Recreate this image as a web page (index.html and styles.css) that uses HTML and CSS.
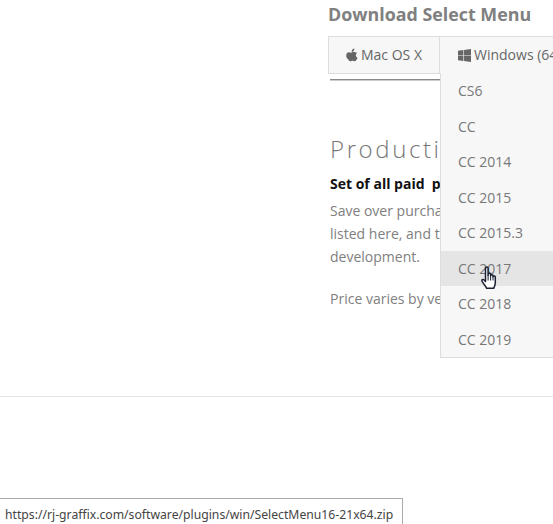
FILE: index.html
```html
<!DOCTYPE html>
<html lang="en">
<head>
    <meta charset="UTF-8">
    <title>Download Select Menu</title>
    <link rel="stylesheet" href="styles.css">
</head>
<body>
    <div class="page">
        <div class="content">
            <h3 class="download-title">Download Select Menu</h3>
            <div class="tabs">
                <div class="tab tab-mac">
                    <svg class="tab-icon" viewBox="0.5 0 13 14.300" width="12" height="14">
                        <path fill="#666" d="M9.600 0.200c.1 1-.3 1.900-.8 2.500-.6.700-1.400 1.100-2.200 1-.1-.9.3-1.800.8-2.400C8 .7 8.900.3 9.600.2zM12.600 4.900c-.9.600-1.400 1.400-1.400 2.500 0 1.200.7 2.200 1.800 2.700-.3.900-.7 1.700-1.300 2.500-.6.800-1.100 1.300-1.900 1.300-.8 0-1.200-.5-2.200-.5s-1.400.5-2.200.5c-.8 0-1.400-.6-2-1.400C1.300 10.900.7 9.200.7 7.700c0-2.300 1.500-3.600 3-3.600.9 0 1.600.6 2.300.6.600 0 1.500-.7 2.600-.7.900 0 2.900.2 4 .9z"/>
                    </svg>
                    <span>Mac OS X</span>
                </div>
                <div class="tab tab-win">
                    <svg class="tab-icon" viewBox="0 0 14 14" width="13" height="13">
                        <path fill="#666" d="M0 2l5.800-.8v5.400H0zM6.500 1.100L14 0v6.600H6.500zM0 7.400h5.800v5.400L0 12zM6.500 7.400H14V14l-7.500-1.100z"/>
                    </svg>
                    <span>Windows (64-bit)</span>
                </div>
            </div>
            <div class="tab-rule"></div>
            <h2 class="product-title">Production Bundle</h2>
            <p class="product-lead">Set of all paid  plugins</p>
            <p class="product-text">Save over purchasing each plugin<br>listed here, and the price supports<br>development.</p>
            <p class="product-text product-price">Price varies by version</p>
        </div>
        <hr class="divider">

        <ul class="menu">
            <li>CS6</li>
            <li>CC</li>
            <li>CC 2014</li>
            <li>CC 2015</li>
            <li>CC 2015.3</li>
            <li class="active">CC 2017</li>
            <li>CC 2018</li>
            <li>CC 2019</li>
        </ul>

        <svg class="cursor" viewBox="0 0 18 24" width="18" height="24">
            <path fill="#fff" stroke="#1a1f33" stroke-width="1.500" stroke-linejoin="round" d="M4.500 2.200c0-1.600 2.600-1.600 2.600 0v7.300V8.300c0-1.400 2.500-1.400 2.500 0v1.500c0-1.300 2.400-1.300 2.400 0v1c0-1.200 2.300-1.200 2.300 .2v5.500c0 2.600-.9 3.900-1.500 5.800H5.600c-.7-2.200-2.400-3.700-3.700-5.600-.9-1.300-1.400-2.200-.8-2.900.7-.7 1.700-.2 3.400 1.700z"/>
            <path fill="none" stroke="#1a1f33" stroke-width="1" d="M7.100 9.500v5M9.600 9.800v4.700M12 10.800v3.700"/>
        </svg>

        <div class="status-link">https://rj-graffix.com/software/plugins/win/SelectMenu16-21x64.zip</div>
    </div>
</body>
</html>
```

FILE: styles.css
```css
html, body {
    margin: 0;
    padding: 0;
    background-color: #fff;
}

.page {
    position: relative;
    width: 553px;
    height: 524px;
    overflow: hidden;
    font-family: "Open Sans", sans-serif;
    font-size: 14px;
    color: #777;
}

.content {
    padding-left: 328px;
    height: 396px;
    box-sizing: border-box;
}

.download-title {
    margin: 0 0 8px;
    font-size: 17.850px;
    line-height: 28px;
    font-weight: 700;
    color: #808080;
    white-space: nowrap;
}

.tabs {
    display: flex;
    width: 300px;
    height: 38px;
    box-sizing: border-box;
    border: 1px solid #ddd;
    background-color: #f7f7f7;
}

.tab {
    display: flex;
    align-items: center;
    white-space: nowrap;
    gap: 3px;
    line-height: 36px;
    color: #666;
}

.tab-mac {
    width: 110px;
    justify-content: center;
    border-right: 1px solid #ddd;
}

.tab-win {
    padding-left: 18px;
}

.tab-icon {
    flex: none;
}

.tab-rule {
    margin: 5px 0 0 2px;
    width: 300px;
    height: 1px;
    border-bottom: 1px solid #ccc;
    background-color: #888;
}

.product-title {
    margin: 51px 0 0 2px;
    font-size: 24px;
    line-height: 33px;
    font-weight: 300;
    letter-spacing: 2.600px;
    color: #777;
    white-space: nowrap;
}

.product-lead {
    margin: 7px 0 4px 2px;
    line-height: 23px;
    font-weight: 700;
    color: #111;
    white-space: pre;
}

.product-text {
    margin: 0 0 0 2px;
    line-height: 23px;
    white-space: nowrap;
    color: #808080;
}

.product-price {
    margin-top: 19px;
}

.divider {
    margin: 0;
    border: 0;
    border-top: 1px solid #e5e5e5;
}

/* dropdown sits over the product text */
.menu {
    position: absolute;
    top: 73px;
    left: 440px;
    width: 160px;
    margin: 0;
    padding: 0;
    list-style: none;
    background-color: #f7f7f7;
    border: 1px solid #ddd;
    border-top: 0;
}

.menu li {
    height: 35.500px;
    line-height: 35.500px;
    padding-left: 17px;
    color: #777;
}

.menu li.active {
    background-color: #e5e5e5;
}

.cursor {
    position: absolute;
    top: 266px;
    left: 481px;
}

.status-link {
    position: absolute;
    left: 0;
    bottom: 0;
    height: 26px;
    box-sizing: border-box;
    padding: 3px 9px 0 5px;
    line-height: 26px;
    background-color: #fff;
    border: 1px solid #aaa;
    border-left: 0;
    border-bottom: 0;
    font-family: "Noto Sans", sans-serif;
    font-size: 12.200px;
    color: #444;
    white-space: nowrap;
}
```
